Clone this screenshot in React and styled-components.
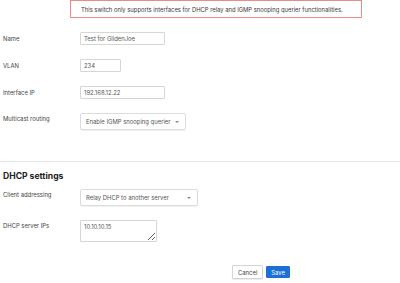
import React from 'react';
import styled, { createGlobalStyle } from 'styled-components';

const Global = createGlobalStyle`
  body {
    margin: 0;
    background: #fff;
    font-family: Inter, "Liberation Sans", sans-serif;
    color: #333;
  }
`
const Page = styled.div`
  width: 400px;
  height: 283px;
  overflow: hidden;
  display: flex;
  flex-direction: column;
`
const Alert = styled.div`
  margin-left: 70px;
  width: 292px;
  height: 18px;
  border: 1px solid #ec8a8a;
  display: flex;
  align-items: center;
  padding-left: 10px;
  box-sizing: border-box;
  font-size: 5.85px;
  white-space: nowrap;
  color: #3a3a3a;
`
const Section = styled.section`
  display: flex;
  flex-direction: column;
  padding-top: ${p => p.$top}px;
`
const Row = styled.div`
  display: flex;
  align-items: flex-start;
  margin-bottom: ${p => p.$gap}px;
`
const Label = styled.label`
  width: 77px;
  padding-left: 3px;
  padding-top: ${p => p.$offset || 3}px;
  font-size: 5.9px;
  color: #444;
`
const Input = styled.input`
  width: ${p => p.$w}px;
  height: 13px;
  box-sizing: border-box;
  border: 1px solid #d6d6d6;
  border-radius: 1px;
  padding: 0 3px;
  font-family: inherit;
  font-size: 5.9px;
  color: #555;
  outline: none;
`
const Select = styled.div`
  width: ${p => p.$w}px;
  height: 17px;
  box-sizing: border-box;
  border: 1px solid #dcdcdc;
  border-radius: 2px;
  box-shadow: 0 1px 1px rgba(0, 0, 0, 0.06);
  display: flex;
  align-items: center;
  justify-content: space-between;
  padding: 0 6px 0 5px;
  font-size: 5.9px;
  white-space: nowrap;
  color: #555;
`
const Caret = styled.span`
  width: 0;
  height: 0;
  border-left: 2.5px solid transparent;
  border-right: 2.5px solid transparent;
  border-top: 2.5px solid #888;
`
const TextArea = styled.textarea`
  width: 77px;
  height: 22px;
  box-sizing: border-box;
  border: 1px solid #d6d6d6;
  border-radius: 1px;
  padding: 2px 3px;
  font-family: inherit;
  font-size: 5.9px;
  color: #555;
  outline: none;
  margin: 0;
`
const Divider = styled.hr`
  margin: 0;
  border: none;
  border-top: 1px solid #e6e6e6;
  width: 100%;
`
const Heading = styled.h2`
  margin: 9px 0 8px 3px;
  font-size: 8.6px;
  font-weight: 700;
  color: #222;
`
const Actions = styled.div`
  display: flex;
  gap: 3px;
  padding-left: 232px;
  margin-top: 23px;
  align-items: center;
`
const Button = styled.button`
  height: ${p => (p.$primary ? 12 : 14)}px;
  padding: 0 ${p => (p.$primary ? 4 : 5)}px;
  font-family: inherit;
  font-size: 5.9px;
  border-radius: 1px;
  border: 1px solid ${p => (p.$primary ? '#1b6fd6' : '#d4d4d4')};
  background: ${p => (p.$primary ? '#1b6fd6' : '#fff')};
  color: ${p => (p.$primary ? '#fff' : '#444')};
  box-shadow: ${p => (p.$primary ? 'none' : '0 1px 1px rgba(0,0,0,0.08)')};
`

export default function App() {
  return (
    <Page>
      <Global />
      <Alert>This switch only supports interfaces for DHCP relay and IGMP snooping querier functionalities.</Alert>
      <Section $top={14}>
        <Row $gap={14}>
          <Label>Name</Label>
          <Input $w={85} defaultValue="Test for GlidenJoe" />
        </Row>
        <Row $gap={14}>
          <Label>VLAN</Label>
          <Input $w={41} defaultValue="234" />
        </Row>
        <Row $gap={14}>
          <Label>Interface IP</Label>
          <Input $w={85} defaultValue="192.168.12.22" />
        </Row>
        <Row $gap={31}>
          <Label $offset={2}>Multicast routing</Label>
          <Select $w={106}>
            Enable IGMP snooping querier
            <Caret />
          </Select>
        </Row>
      </Section>
      <Divider />
      <Heading>DHCP settings</Heading>
      <Section $top={0}>
        <Row $gap={14}>
          <Label $offset={2}>Client addressing</Label>
          <Select $w={118}>
            Relay DHCP to another server
            <Caret />
          </Select>
        </Row>
        <Row $gap={0}>
          <Label $offset={2}>DHCP server IPs</Label>
          <TextArea defaultValue="10.10.10.15" />
        </Row>
      </Section>
      <Actions>
        <Button>Cancel</Button>
        <Button $primary>Save</Button>
      </Actions>
    </Page>
  );
}
